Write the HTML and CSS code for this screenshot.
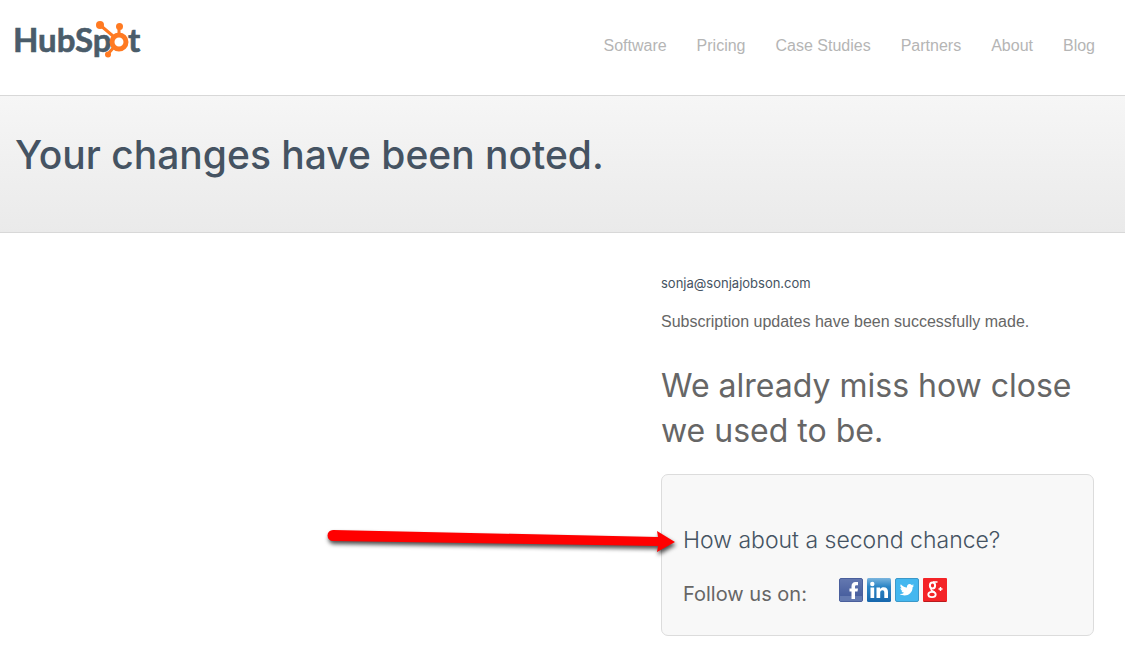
FILE: index.html
```
<!DOCTYPE html>
<html lang="en">
<head>
  <meta charset="UTF-8">
  <meta name="viewport" content="width=device-width, initial-scale=1">
  <title>HubSpot - Subscription Preferences</title>
  <link rel="stylesheet" href="styles.css">
</head>
<body>

<header class="header">
  <a href="#" class="logo" aria-label="HubSpot">
    <svg width="132" height="42" viewBox="-4 0 132 42">
      <text class="logo-text" x="-2" y="33">HubSp</text>
      <text class="logo-text" x="113" y="33">t</text>
      <g class="sprocket">
        <path d="M85 6L98 17M104 8V16M99 28L93 35" stroke-width="3"/>
        <circle cx="104" cy="23" r="7" stroke-width="5"/>
        <circle class="dot" cx="85" cy="6" r="4"/>
        <circle class="dot" cx="104.500" cy="7.500" r="3.500"/>
        <circle class="dot" cx="93" cy="35.500" r="3"/>
      </g>
    </svg>
  </a>
  <nav class="nav">
    <a href="#">Software</a>
    <a href="#">Pricing</a>
    <a href="#">Case Studies</a>
    <a href="#">Partners</a>
    <a href="#">About</a>
    <a href="#">Blog</a>
  </nav>
</header>

<div class="banner">
  <h1>Your changes have been noted.</h1>
</div>

<main class="content">
  <div class="column">
    <p class="email">sonja@sonjajobson.com</p>
    <p class="status">Subscription updates have been successfully made.</p>
    <h2>We already miss how close we used to be.</h2>

    <div class="box">
      <svg class="arrow" width="350" height="28" viewBox="0 0 350 28">
        <path d="M5 3L330 10L329 4L347 15L329 25L330 19L5 14A5 5 0 0 1 5 3Z" fill="#f00"/>
      </svg>
      <h3>How about a second chance?</h3>
      <div class="follow">
        <span class="follow-label">Follow us on:</span>
        <div class="social">
          <a href="#" aria-label="Facebook">
            <svg width="24" height="24" viewBox="0 0 24 24">
              <defs>
                <linearGradient id="fb" x1="0" y1="0" x2="0" y2="1">
                  <stop offset="0" stop-color="#6478b0"/>
                  <stop offset="1" stop-color="#3f5799"/>
                </linearGradient>
              </defs>
              <rect x=".5" y=".5" width="23" height="23" rx="1.5" fill="url(#fb)" stroke="#4a5f9c"/>
              <path d="M1 18H23V23H1Z" fill="#6379b0"/>
              <path d="M12.500 21V13.500H10.500V10.500H12.500V8.500C12.500 5.500 14 4 16.500 4H19V7.200H17.500C16.300 7.200 16 7.800 16 8.800V10.500H19L18.500 13.500H16V21Z" fill="#fff"/>
            </svg>
          </a>
          <a href="#" aria-label="LinkedIn">
            <svg width="24" height="24" viewBox="0 0 24 24">
              <defs>
                <linearGradient id="in" x1="0" y1="0" x2="0" y2="1">
                  <stop offset="0" stop-color="#7bb5de"/>
                  <stop offset=".35" stop-color="#2d86c6"/>
                  <stop offset="1" stop-color="#1667ad"/>
                </linearGradient>
              </defs>
              <rect width="24" height="24" rx="1.500" fill="url(#in)"/>
              <circle cx="5.300" cy="6" r="2.200" fill="#fff"/>
              <path d="M3.500 9.500H7.200V20H3.500ZM9.500 9.500H13V11C14 9.700 15 9.200 16.700 9.200C19.500 9.200 21 11 21 14V20H17.300V14.500C17.300 13 16.700 12.300 15.400 12.300C14 12.300 13.200 13.200 13.200 14.700V20H9.500Z" fill="#fff"/>
            </svg>
          </a>
          <a href="#" aria-label="Twitter">
            <svg width="24" height="24" viewBox="0 0 24 24">
              <rect x=".5" y=".5" width="23" height="23" rx="1.500" fill="#44b7ef" stroke="#3b98c9"/>
              <path d="M19 7.500C18.500 7.800 17.900 7.900 17.300 8C17.900 7.600 18.400 7 18.600 6.300C18 6.700 17.400 6.900 16.700 7C14.700 5 11.500 6.500 12 9.500C9.500 9.400 7.300 8.200 5.800 6.300C5 7.700 5.400 9.300 6.700 10.200C6.200 10.200 5.800 10.100 5.400 9.900C5.400 11.300 6.400 12.500 7.700 12.800C7.200 12.900 6.800 12.900 6.400 12.800C6.800 14 7.800 14.800 9.100 14.800C7.800 15.800 6.300 16.200 4.700 16C10.500 19.700 17.700 16 17.600 9.200C18.200 8.700 18.600 8.200 19 7.500Z" fill="#fff"/>
            </svg>
          </a>
          <a href="#" aria-label="Google Plus">
            <svg width="24" height="24" viewBox="0 0 24 24">
              <rect width="24" height="24" rx="1" fill="#f42427"/>
              <path d="M1 23.500H23" stroke="#b81b1e"/>
              <g fill="none" stroke="#fff">
                <ellipse cx="9.500" cy="7.500" rx="2.600" ry="3" stroke-width="2"/>
                <path d="M10 4H14.500M8.500 10.500C7 12.500 9.500 12.700 11.500 14" stroke-width="1.500"/>
                <ellipse cx="9" cy="16.500" rx="3.700" ry="2.700" stroke-width="1.800"/>
                <path d="M15.500 11H19.500M17.500 9V13" stroke-width="1.400"/>
              </g>
            </svg>
          </a>
        </div>
      </div>
    </div>
  </div>
</main>

</body>
</html>
```
FILE: styles.css
```
* { box-sizing: border-box; }
body { font-family: "Liberation Sans", Arial, sans-serif; font-size: 16px; background: #fff; color: #666; margin: 0; }
h1, h2, h3, p { margin: 0; }
h1, h2, h3, .email, .follow-label { font-family: Inter, sans-serif; }

.header { display: flex; justify-content: space-between; align-items: flex-start; padding: 19px 30px 34px 11px; }
.logo { display: block; height: 42px; }
.logo svg { display: block; overflow: visible; }
.logo-text { font-family: Lato, sans-serif; font-size: 33px; font-weight: 700; fill: #4a5c6a; stroke: #4a5c6a; stroke-width: 0.6; }
.sprocket { fill: none; stroke: #ff7a22; }
.sprocket .dot { fill: #ff7a22; stroke: none; }
.nav { display: flex; gap: 30px; padding-top: 17px; line-height: 20px; }
.nav a { color: #b5b5b5; text-decoration: none; }

.banner { background: linear-gradient(#f6f6f6, #eaeaea); border-top: 1px solid #d8d8d8; border-bottom: 1px solid #d8d8d8; padding: 35px 15px 53px; }
h1 { font-size: 39px; line-height: 48px; font-weight: 500; color: #455362; }

.content { padding: 40px 31px 28px 15px; }
.column { width: 433px; max-width: 100%; margin-left: auto; }
.email { font-size: 13px; line-height: 20px; color: #455362; }
.status { line-height: 20px; margin-top: 19px; }
h2 { font-size: 32px; line-height: 45px; font-weight: 400; margin-top: 31px; }

.box { position: relative; background: #f8f8f8; border: 1px solid #dcdcdc; border-radius: 7px; margin-top: 21px; padding: 50px 21px 25px; }
h3 { font-size: 23px; line-height: 30px; font-weight: 300; color: #455362; }
.follow { display: flex; align-items: flex-start; gap: 32px; margin-top: 23px; }
.follow-label { font-size: 20px; line-height: 32px; }
.social { display: flex; gap: 4px; }
.social a { display: block; height: 24px; }
.social svg { display: block; }

/* red pointer coming in from the left of the box */
.arrow { position: absolute; right: calc(100% - 16px); top: 52px; overflow: visible; filter: drop-shadow(1px 3px 2px rgba(0, 0, 0, 0.7)); }
```
